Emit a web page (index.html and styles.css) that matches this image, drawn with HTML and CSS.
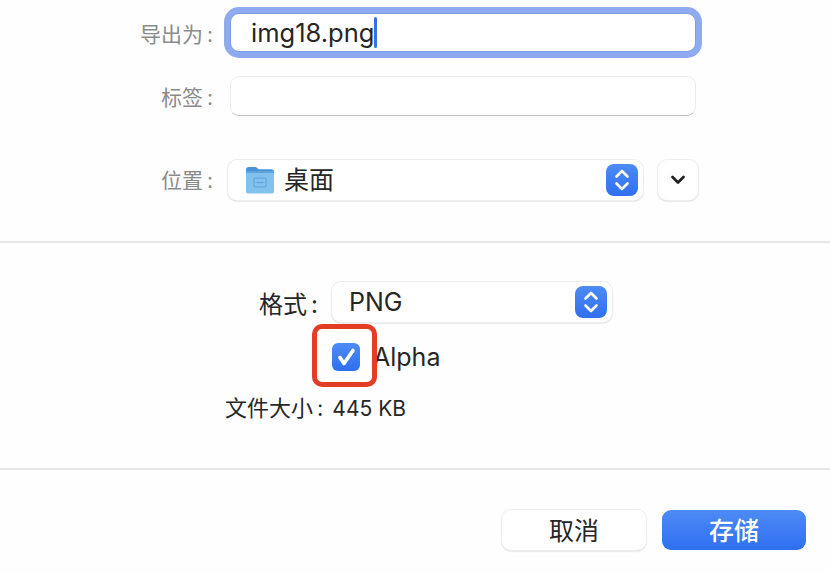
FILE: index.html
```html
<!DOCTYPE html>
<html lang="zh-CN">
<head>
    <meta charset="UTF-8">
    <meta name="viewport" content="width=device-width, initial-scale=1.0">
    <title>存储</title>
    <link rel="stylesheet" href="styles.css">
</head>
<body>
    <section class="top">
        <div class="row row-name">
            <label class="label">导出为<span class="colon">:</span></label>
            <div class="input input-focus"><span class="value">img18.png</span><span class="caret"></span></div>
        </div>
        <div class="row row-tags">
            <label class="label">标签<span class="colon">:</span></label>
            <div class="input"></div>
        </div>
        <div class="row row-where">
            <label class="label">位置<span class="colon">:</span></label>
            <div class="popup popup-where">
                <svg class="folder" width="30" height="28" viewBox="0 0 30 28">
                    <path d="M1 3.5C1 2 2 1 3.5 1h6.5c1 0 1.600.4 2.200 1l1.300 1.300h13C28 3.300 29 4.300 29 5.500V10H1z" fill="#4a93d6"/>
                    <rect x="1" y="5" width="28" height="22.500" rx="2" fill="#80c1ee"/>
                    <rect x="1" y="5" width="28" height="2" fill="#5aa4e0"/>
                    <rect x="9" y="12" width="12" height="9" rx="1" fill="none" stroke="#5a9fd4"/>
                    <rect x="11.500" y="16" width="7" height="1" fill="#5a9fd4"/>
                </svg>
                <span class="popup-text">桌面</span>
                <span class="stepper">
                    <svg width="32" height="32" viewBox="0 0 32 32"><path d="M10.500 12.500 16 7l5.500 5.500M10.500 19.500 16 25l5.500-5.500" fill="none" stroke="#fff" stroke-width="2.600" stroke-linecap="round" stroke-linejoin="round"/></svg>
                </span>
            </div>
            <button class="more">
                <svg width="16" height="10" viewBox="0 0 16 10"><path d="M2.500 2 8 7.500 13.500 2" fill="none" stroke="#222" stroke-width="2.800" stroke-linecap="round" stroke-linejoin="round"/></svg>
            </button>
        </div>
    </section>

    <section class="options">
        <div class="format-row">
            <span class="format-label">格式<span class="colon">:</span></span>
            <div class="popup popup-format">
                <span class="popup-text latin">PNG</span>
                <span class="stepper">
                    <svg width="32" height="32" viewBox="0 0 32 32"><path d="M10.500 12.500 16 7l5.500 5.500M10.500 19.500 16 25l5.500-5.500" fill="none" stroke="#fff" stroke-width="2.600" stroke-linecap="round" stroke-linejoin="round"/></svg>
                </span>
            </div>
        </div>
        <div class="check-row">
            <span class="check">
                <svg width="28" height="28" viewBox="0 0 28 28"><path d="M8 14.500 12 20.500 21 7.500" fill="none" stroke="#fff" stroke-width="3.600" stroke-linecap="round" stroke-linejoin="round"/></svg>
                <span class="highlight"></span>
            </span>
            <span class="check-text">Alpha</span>
        </div>
        <div class="size-row">文件大小<span class="colon">:</span><span class="size-value">445 KB</span></div>
    </section>

    <footer class="actions">
        <button class="btn">取消</button>
        <button class="btn btn-primary">存储</button>
    </footer>
</body>
</html>
```

FILE: styles.css
```css
html, body {
    margin: 0;
    height: 572px;
    overflow: hidden;
    background: #fefefe;
    font-family: Inter, "Noto Sans CJK SC", sans-serif;
    color: #262626;
}
.top {
    height: 241px;
    padding-top: 13px;
    box-sizing: border-box;
}
.row {
    display: flex;
    align-items: center;
}
.row-tags {
    margin-top: 24px;
}
.row-where {
    margin-top: 44px;
}
.label {
    width: 213px;
    text-align: right;
    font-size: 21px;
    color: #8b8b8b;
}
.colon {
    margin-left: 4px;
}
.row-where .label {
    padding-bottom: 2px;
}
.input {
    box-sizing: border-box;
    width: 466px;
    height: 40px;
    margin-left: 17px;
    display: flex;
    align-items: center;
    background: #fff;
    border: 1px solid #ececec;
    border-bottom-color: #c0c0c0;
    border-radius: 9px;
}
.input-focus {
    height: 39px;
    padding-left: 20px;
    border: 1px solid #7d9ce6;
    box-shadow: 0 0 0 6px #8fabf0;
}
.value {
    font-size: 25.500px;
    line-height: 41px;
}
.caret {
    width: 3px;
    height: 31px;
    background: #3a6fe3;
    border-radius: 2px;
}
.popup {
    box-sizing: border-box;
    height: 40px;
    display: flex;
    align-items: center;
    background: #fff;
    border-radius: 9px;
    box-shadow: 0 0 0 1px #eeeeee, 0 1px 2px #bbbbbb;
}
.popup-where {
    width: 415px;
    margin-left: 15px;
    padding-left: 17px;
}
.folder {
    flex: none;
}
.popup-text {
    margin-left: 9px;
    font-size: 25px;
    line-height: 38px;
    flex: 1;
}
.latin {
    margin-left: 17px;
    line-height: 42px;
}
.stepper {
    width: 32px;
    height: 32px;
    margin-right: 5px;
    border-radius: 8px;
    background: linear-gradient(#4d8bf5, #2f6ff0);
    display: block;
}
.stepper svg {
    display: block;
}
.more {
    box-sizing: border-box;
    width: 40px;
    height: 40px;
    margin-left: 15px;
    padding: 0;
    border: 0;
    border-radius: 9px;
    background: #fff;
    box-shadow: 0 0 0 1px #eeeeee, 0 1px 2px #bbbbbb;
    display: flex;
    align-items: center;
    justify-content: center;
}
.options {
    height: 229px;
    box-sizing: border-box;
    border-top: 2px solid #e6e6e6;
    border-bottom: 2px solid #e6e6e6;
    padding-top: 39px;
}
.format-row {
    display: flex;
    align-items: center;
}
.format-label {
    width: 332px;
    box-sizing: border-box;
    padding-left: 259px;
    font-size: 24px;
}
.popup-format {
    width: 280px;
}
.check-row {
    display: flex;
    align-items: center;
    margin-top: 20px;
    margin-left: 332px;
}
.check {
    position: relative;
    width: 28px;
    height: 28px;
    border-radius: 6px;
    background: linear-gradient(#4d8bf5, #2f6ff0);
}
.check svg {
    display: block;
}
.highlight {
    position: absolute;
    left: -20px;
    top: -19px;
    width: 65px;
    height: 63px;
    box-sizing: border-box;
    border: 5px solid #e43d25;
    border-radius: 10px;
}
.check-text {
    margin-left: 13px;
    font-size: 25px;
    line-height: 30px;
}
.size-row {
    margin-top: 22px;
    margin-left: 225px;
    font-size: 22px;
    line-height: 28px;
}
.size-value {
    margin-left: 9px;
    font-size: 21px;
}
.actions {
    display: flex;
    justify-content: flex-end;
    gap: 16px;
    padding: 40px 24px 0 0;
}
.btn {
    width: 144px;
    height: 40px;
    padding: 0 0 3px;
    border: 0;
    border-radius: 9px;
    background: #fff;
    box-shadow: 0 0 0 1px #eeeeee, 0 1px 2px #bbbbbb;
    font-family: inherit;
    font-size: 25px;
    color: #262626;
}
.btn-primary {
    background: linear-gradient(#4d8bf5, #2f6ff0);
    box-shadow: none;
    color: #fff;
    font-weight: 500;
}
```
